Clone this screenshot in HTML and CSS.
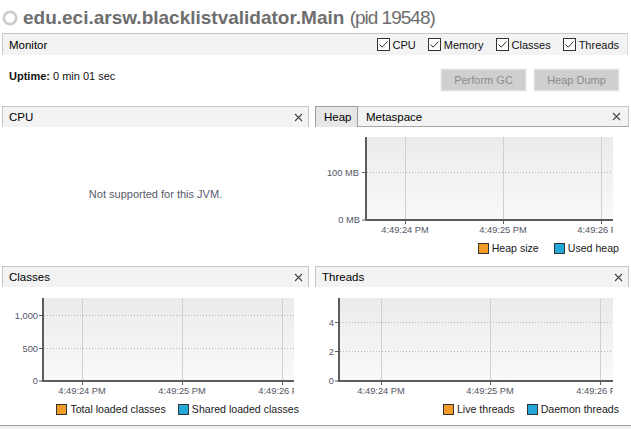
FILE: index.html
```html
<!DOCTYPE html>
<html>
<head>
<meta charset="utf-8">
<link rel="stylesheet" href="styles.css">
</head>
<body>
<div class="page">
  <header class="title">
    <svg class="status" width="18" height="18" viewBox="0 0 18 18"><circle cx="9" cy="9" r="6.2" fill="none" stroke="#cdcdcd" stroke-width="2.8"/></svg>
    <h1><b>edu.eci.arsw.blacklistvalidator.Main</b> <span class="pid">(pid 19548)</span></h1>
  </header>

  <div class="monitor-bar">
    <span class="bar-title">Monitor</span>
    <div class="checks">
      <label class="check"><svg class="box" width="13" height="13" viewBox="0 0 13 13"><rect x="0.5" y="0.5" width="12" height="12" fill="#fff" stroke="#333"/><polyline points="2.5,6.5 5.2,9.2 10.5,3.5" fill="none" stroke="#333" stroke-width="1"/></svg>CPU</label>
      <label class="check"><svg class="box" width="13" height="13" viewBox="0 0 13 13"><rect x="0.5" y="0.5" width="12" height="12" fill="#fff" stroke="#333"/><polyline points="2.5,6.5 5.2,9.2 10.5,3.5" fill="none" stroke="#333" stroke-width="1"/></svg>Memory</label>
      <label class="check"><svg class="box" width="13" height="13" viewBox="0 0 13 13"><rect x="0.5" y="0.5" width="12" height="12" fill="#fff" stroke="#333"/><polyline points="2.5,6.5 5.2,9.2 10.5,3.5" fill="none" stroke="#333" stroke-width="1"/></svg>Classes</label>
      <label class="check"><svg class="box" width="13" height="13" viewBox="0 0 13 13"><rect x="0.5" y="0.5" width="12" height="12" fill="#fff" stroke="#333"/><polyline points="2.5,6.5 5.2,9.2 10.5,3.5" fill="none" stroke="#333" stroke-width="1"/></svg>Threads</label>
    </div>
  </div>

  <div class="info-row">
    <div class="uptime"><b>Uptime:</b> 0 min 01 sec</div>
    <div class="buttons">
      <button class="btn" disabled>Perform GC</button>
      <button class="btn" disabled>Heap Dump</button>
    </div>
  </div>

  <div class="grid">
    <!-- CPU -->
    <section class="panel">
      <div class="panel-head">
        <span class="head-title">CPU</span>
        <svg class="close" width="9" height="9" viewBox="0 0 9 9"><path d="M1 1L8 8M8 1L1 8" stroke="#444" stroke-width="1.1"/></svg>
      </div>
      <div class="panel-body center">
        <span class="unsupported">Not supported for this JVM.</span>
      </div>
    </section>

    <!-- Heap -->
    <section class="panel">
      <div class="panel-head tabs">
        <span class="tab active">Heap</span>
        <span class="tab">Metaspace</span>
        <svg class="close" width="9" height="9" viewBox="0 0 9 9"><path d="M1 1L8 8M8 1L1 8" stroke="#444" stroke-width="1.1"/></svg>
      </div>
      <div class="panel-body">
        <svg class="chart" width="314" height="112" viewBox="0 0 314 112">
          <defs>
            <linearGradient id="bg1" x1="0" y1="0" x2="0" y2="1"><stop offset="0" stop-color="#ebebeb"/><stop offset="1" stop-color="#f9f9f9"/></linearGradient>
            <clipPath id="clip1"><rect x="0" y="0" width="298" height="112"/></clipPath>
          </defs>
          <rect x="52" y="10" width="246" height="83" fill="url(#bg1)"/>
          <g stroke="#d0d0d0"><line x1="90.5" y1="10" x2="90.5" y2="93"/><line x1="188.5" y1="10" x2="188.5" y2="93"/><line x1="286.5" y1="10" x2="286.5" y2="93"/></g>
          <line x1="52" y1="45.5" x2="298" y2="45.5" stroke="#b5b5b5" stroke-dasharray="1 2"/>
          <g stroke="#5c5c5c"><line x1="51" y1="10" x2="51" y2="94" stroke-width="2"/><line x1="50" y1="93" x2="298" y2="93" stroke-width="2"/>
            <line x1="47" y1="45.5" x2="51" y2="45.5"/><line x1="47" y1="93" x2="51" y2="93"/>
            <line x1="90.5" y1="93" x2="90.5" y2="97"/><line x1="188.5" y1="93" x2="188.5" y2="97"/><line x1="286.5" y1="93" x2="286.5" y2="97"/></g>
          <g class="axis-text" text-anchor="end"><text x="44" y="48.5">100 MB</text><text x="45" y="96">0 MB</text></g>
          <g class="axis-text" text-anchor="middle" clip-path="url(#clip1)"><text x="90" y="106">4:49:24 PM</text><text x="188" y="106">4:49:25 PM</text><text x="286" y="106">4:49:26 PM</text></g>
        </svg>
        <div class="legend gap15">
          <span class="item"><i class="sw orange"></i>Heap size</span>
          <span class="item"><i class="sw blue"></i>Used heap</span>
        </div>
      </div>
    </section>

    <!-- Classes -->
    <section class="panel">
      <div class="panel-head">
        <span class="head-title">Classes</span>
        <svg class="close" width="9" height="9" viewBox="0 0 9 9"><path d="M1 1L8 8M8 1L1 8" stroke="#444" stroke-width="1.1"/></svg>
      </div>
      <div class="panel-body">
        <svg class="chart" width="307" height="113" viewBox="0 0 307 113">
          <defs>
            <linearGradient id="bg2" x1="0" y1="0" x2="0" y2="1"><stop offset="0" stop-color="#ebebeb"/><stop offset="1" stop-color="#f9f9f9"/></linearGradient>
            <clipPath id="clip2"><rect x="0" y="0" width="292" height="113"/></clipPath>
          </defs>
          <rect x="42" y="11" width="250" height="83" fill="url(#bg2)"/>
          <g stroke="#d0d0d0"><line x1="80.5" y1="11" x2="80.5" y2="94"/><line x1="180.5" y1="11" x2="180.5" y2="94"/><line x1="280.5" y1="11" x2="280.5" y2="94"/></g>
          <g stroke="#b5b5b5" stroke-dasharray="1 2"><line x1="42" y1="28.5" x2="292" y2="28.5"/><line x1="42" y1="61.5" x2="292" y2="61.5"/></g>
          <g stroke="#5c5c5c"><line x1="41" y1="11" x2="41" y2="95" stroke-width="2"/><line x1="40" y1="94" x2="292" y2="94" stroke-width="2"/>
            <line x1="37" y1="28.5" x2="41" y2="28.5"/><line x1="37" y1="61.5" x2="41" y2="61.5"/><line x1="37" y1="94" x2="41" y2="94"/>
            <line x1="80.5" y1="94" x2="80.5" y2="98"/><line x1="180.5" y1="94" x2="180.5" y2="98"/><line x1="280.5" y1="94" x2="280.5" y2="98"/></g>
          <g class="axis-text" text-anchor="end"><text x="36" y="31.5">1,000</text><text x="36" y="64.5">500</text><text x="36" y="97">0</text></g>
          <g class="axis-text" text-anchor="middle" clip-path="url(#clip2)"><text x="80" y="107">4:49:24 PM</text><text x="180" y="107">4:49:25 PM</text><text x="280" y="107">4:49:26 PM</text></g>
        </svg>
        <div class="legend">
          <span class="item"><i class="sw orange"></i>Total loaded classes</span>
          <span class="item"><i class="sw blue"></i>Shared loaded classes</span>
        </div>
      </div>
    </section>

    <!-- Threads -->
    <section class="panel">
      <div class="panel-head">
        <span class="head-title">Threads</span>
        <svg class="close" width="9" height="9" viewBox="0 0 9 9"><path d="M1 1L8 8M8 1L1 8" stroke="#444" stroke-width="1.1"/></svg>
      </div>
      <div class="panel-body">
        <svg class="chart" width="314" height="113" viewBox="0 0 314 113">
          <defs>
            <linearGradient id="bg3" x1="0" y1="0" x2="0" y2="1"><stop offset="0" stop-color="#ebebeb"/><stop offset="1" stop-color="#f9f9f9"/></linearGradient>
            <clipPath id="clip3"><rect x="0" y="0" width="298" height="113"/></clipPath>
          </defs>
          <rect x="25" y="11" width="273" height="83" fill="url(#bg3)"/>
          <g stroke="#d0d0d0"><line x1="66.5" y1="11" x2="66.5" y2="94"/><line x1="175.5" y1="11" x2="175.5" y2="94"/><line x1="285.5" y1="11" x2="285.5" y2="94"/></g>
          <g stroke="#b5b5b5" stroke-dasharray="1 2"><line x1="25" y1="35.5" x2="298" y2="35.5"/><line x1="25" y1="64.5" x2="298" y2="64.5"/></g>
          <g stroke="#5c5c5c"><line x1="24" y1="11" x2="24" y2="95" stroke-width="2"/><line x1="23" y1="94" x2="298" y2="94" stroke-width="2"/>
            <line x1="20" y1="35.5" x2="24" y2="35.5"/><line x1="20" y1="64.5" x2="24" y2="64.5"/><line x1="20" y1="94" x2="24" y2="94"/>
            <line x1="66.5" y1="94" x2="66.5" y2="98"/><line x1="175.5" y1="94" x2="175.5" y2="98"/><line x1="285.5" y1="94" x2="285.5" y2="98"/></g>
          <g class="axis-text" text-anchor="end"><text x="19" y="38.5">4</text><text x="19" y="67.5">2</text><text x="19" y="97">0</text></g>
          <g class="axis-text" text-anchor="middle" clip-path="url(#clip3)"><text x="66" y="107">4:49:24 PM</text><text x="175" y="107">4:49:25 PM</text><text x="285" y="107">4:49:26 PM</text></g>
        </svg>
        <div class="legend">
          <span class="item"><i class="sw orange"></i>Live threads</span>
          <span class="item"><i class="sw blue"></i>Daemon threads</span>
        </div>
      </div>
    </section>
  </div>

  <footer class="footer"></footer>
</div>
</body>
</html>
```

FILE: styles.css
```css
* { box-sizing: border-box; }
html, body { margin: 0; padding: 0; background: #fff; }
body {
  font-family: "Liberation Sans", Arial, sans-serif;
  font-size: 11px;
  color: #111;
  width: 631px;
  height: 429px;
  overflow: hidden;
}
.page {
  display: flex;
  flex-direction: column;
  height: 429px;
}

/* Title */
.title {
  height: 33px;
  display: flex;
  align-items: center;
  padding-left: 1px;
  padding-top: 2px;
}
.status { flex: none; margin-right: 4px; }
.title h1 {
  margin: 0;
  font-size: 19px;
  font-weight: normal;
  color: #6e6e6e;
  white-space: nowrap;
  line-height: 22px;
}
.title h1 b { font-weight: bold; }
.pid { letter-spacing: -1px; }

/* Monitor bar */
.monitor-bar {
  height: 22px;
  margin: 0 3px 0 2px;
  border-top: 1px solid #c8c8c8;
  border-left: 1px solid #c8c8c8;
  border-right: 1px solid #dcdcdc;
  background: #f3f3f3;
  display: flex;
  align-items: center;
  justify-content: space-between;
  padding: 0 8px 0 6px;
}
.bar-title { font-size: 11.5px; color: #000; }
.checks { display: flex; gap: 12px; }
.check {
  display: flex;
  align-items: center;
  gap: 3px;
  font-size: 11px;
  color: #111;
}
.box { flex: none; }

/* Info row */
.info-row {
  height: 51px;
  display: flex;
  justify-content: space-between;
  align-items: flex-start;
  padding: 0 12px 0 9px;
}
.uptime { margin-top: 15px; line-height: 13px; }
.uptime b { font-weight: bold; }
.buttons { display: flex; gap: 8px; margin-top: 14px; }
.btn {
  width: 85px;
  height: 22px;
  font-family: inherit;
  font-size: 11px;
  color: #8c8c8c;
  background: #cfcfcf;
  border: 1px solid #e2e2e2;
  padding: 0;
  outline: 1px solid #f4f4f4;
}

/* Panels grid */
.grid {
  display: grid;
  grid-template-columns: 307px 314px;
  grid-template-rows: 154px 159px;
  column-gap: 6px;
  row-gap: 6px;
  padding-left: 2px;
  height: 319px;
}
.panel {
  display: flex;
  flex-direction: column;
  min-width: 0;
}
.panel-head {
  height: 21px;
  flex: none;
  display: flex;
  align-items: center;
  justify-content: space-between;
  background: #f3f3f3;
  border: 1px solid #c4c4c4;
  border-bottom: none;
  padding: 0 5px 0 6px;
}
.head-title { font-size: 11.5px; color: #000; }
.close { flex: none; }

.panel-head.tabs {
  padding: 0 7px 0 0;
  justify-content: flex-start;
  align-items: stretch;
  border-bottom: 1px solid #a8a8a8;
  border-top-color: #c4c4c4;
}
.tab {
  display: flex;
  align-items: center;
  font-size: 11.5px;
  color: #000;
  padding: 0 8px 0 8px;
}
.tab.active {
  background: #e6e6e6;
  border: 1px solid #9c9c9c;
  border-bottom: none;
  margin: -1px 0 -1px -1px;
  padding: 0 8px 0 8px;
  width: 43px;
}
.panel-head.tabs .close { margin-left: auto; align-self: center; }

.panel-body {
  flex: 1;
  display: flex;
  flex-direction: column;
  background: #fff;
  min-height: 0;
}
.panel-body.center {
  align-items: center;
  justify-content: center;
}
.unsupported { color: #565a6c; font-size: 11px; margin-left: 0; }

.chart { display: block; flex: none; }
.axis-text { font-family: "Liberation Sans", Arial, sans-serif; font-size: 9.3px; fill: #555566; }

.legend {
  height: 18px;
  display: flex;
  justify-content: flex-end;
  align-items: center;
  gap: 12px;
  padding-right: 10px;
  font-size: 10.6px;
  color: #1a1a1a;
}
.legend.gap15 { gap: 15px; }
.item { display: flex; align-items: center; gap: 3px; white-space: nowrap; }
.sw {
  display: inline-block;
  width: 11px;
  height: 11px;
  border: 1px solid #333;
}
.sw.orange { background: #f29c27; }
.sw.blue { background: #23a7d8; }

/* Footer */
.footer {
  flex: 1;
  border-top: 1px solid #a0a0a0;
  background: #f0f0f0;
}
```
